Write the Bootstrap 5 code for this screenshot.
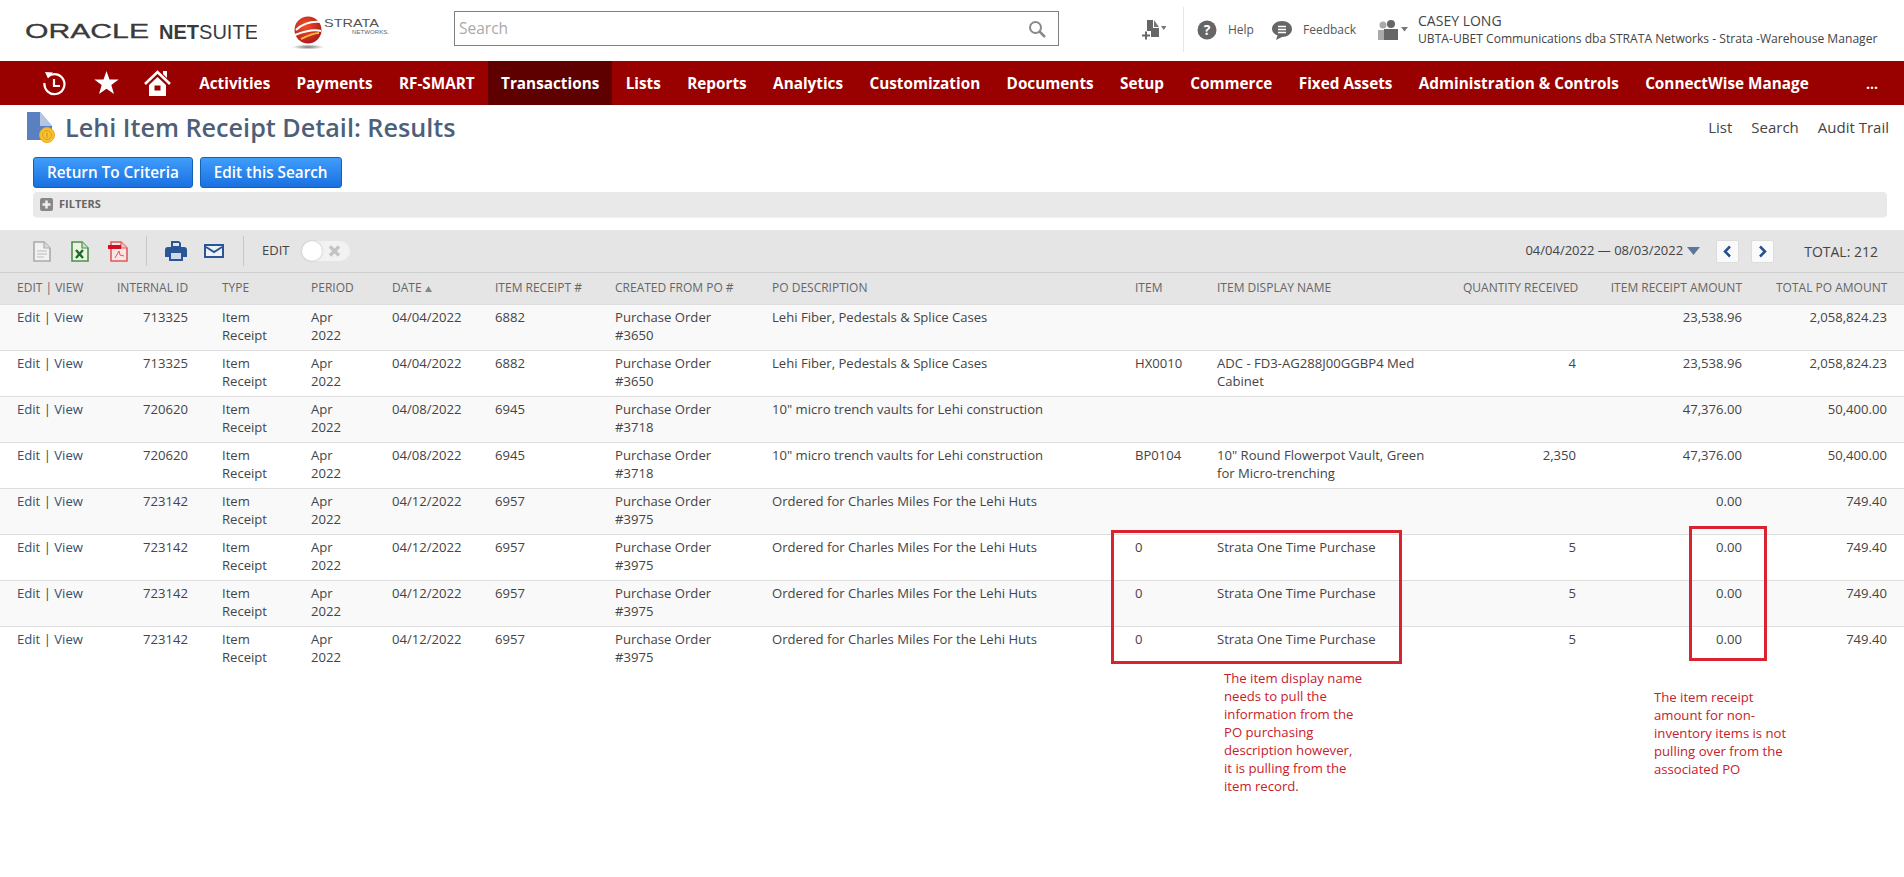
<!DOCTYPE html>
<html lang="en">
<head>
<meta charset="utf-8">
<title>Lehi Item Receipt Detail: Results</title>
<link href="https://cdn.jsdelivr.net/npm/bootstrap@5.3.0/dist/css/bootstrap.min.css" rel="stylesheet">
<style>
html,body{background:#fff;}
body{font-family:"Open Sans","Liberation Sans",sans-serif;font-size:13px;color:#444;position:relative;min-height:877px;overflow:hidden;}
.top-bar{height:61px;}
.top-bar>*,.tools>*{flex-shrink:0;}
.logo-ns{margin-left:25px;width:232px;height:30px;}
.logo-st{margin-left:36px;width:100px;height:44px;}
.search-box{margin:0 0 4px 61px;width:605px;height:35px;border:1px solid #808080;padding:0 12px 0 4px;color:#aaa;font-size:15.5px;}
.tools{margin:0 0 2px 83px;height:45px;}
.tool-div{width:1px;height:45px;background:#e6e6e6;margin:0 13px 0 17px;}
.tool-txt{font-size:12px;color:#555;margin-left:11px;}
.tool-fb{margin-left:18px;}
.tool-txt.fb-txt{margin-right:20px;}
.who{line-height:18px;margin-left:9px;white-space:nowrap;color:#444;}
.who-name{font-size:14px;}
.who-org{font-size:12.1px;}
.main-nav{height:44px;background:#990000;padding-left:25px;color:#fff;}
.ic-a{width:58px;}
.ic-b{width:46px;}
.ic-c{width:57px;}
.nav-it{height:44px;padding:0 13.2px;font-weight:700;font-size:15.3px;color:#fff;white-space:nowrap;}
.nav-on{background:#5e0000;}
.nav-more{margin-left:auto;margin-right:26px;font-weight:700;font-size:14px;}
.title-row{height:52px;padding:0 15px 8px 27px;}
.page-title{font-size:25.2px;font-weight:600;color:#4d5f79;margin:0 0 0 10px;line-height:30px;}
.page-links{font-size:15px;color:#444;gap:19px;}
.act-btns{padding-left:33px;gap:7px;}
.act-btn{height:31px;padding:0 13px;font-size:15.3px;font-weight:600;line-height:29px;color:#fff;border:1px solid #1462b5;border-radius:3px;background:linear-gradient(#3f9dfb,#1a70e0);}
.filter-bar{margin:4px 17px 0 33px;height:26px;background:#e9e9e9;border-radius:4px;border-bottom:1px solid #f2f2f2;padding-left:7px;gap:6px;font-size:11px;font-weight:700;color:#666;}
.tool-row{margin-top:12px;height:43px;background:#e5e5e5;border-bottom:1px solid #d0d0d0;}
.i-doc{margin-left:33px;}
.i-xls{margin-left:20px;}
.i-pdf{margin-left:19px;}
.i-prn{margin-left:18px;}
.i-mail{margin-left:17px;}
.tb-sep{width:1px;height:30px;background:#c8c8c8;}
.sep-a{margin-left:18px;}
.sep-b{margin-left:19px;}
.tb-edit{font-size:13px;color:#444;margin-left:18px;}
.edit-tog{width:48px;height:20px;border-radius:10px;background:#f2f2f2;margin-left:13px;position:relative;}
.edit-knob{position:absolute;left:0;top:0;width:20px;height:20px;border-radius:50%;background:#fff;box-shadow:0 0 2px #aaa;}
.edit-x{position:absolute;left:26px;top:4px;}
.date-rng{font-size:13px;color:#444;white-space:nowrap;}
.pg-btn{width:23px;height:23px;background:#fafafa;border:1px solid #ddd;border-radius:2px;}
.pg-next{margin-left:12px;}
.tot{font-size:14px;color:#444;margin:0 26px 0 30px;white-space:nowrap;}
table.rep{table-layout:fixed;width:1904px;margin:0;border-collapse:collapse;}
.rep th{background:#e5e5e5;height:31px;padding:0 17px;font-size:12px;font-weight:400;color:#666;white-space:nowrap;vertical-align:middle;border:0;border-bottom:1px solid #ddd;}
.rep td{padding:3px 17px 6px;font-size:13.1px;line-height:18px;color:#444;vertical-align:top;border:0;border-bottom:1px solid #ddd;background:#fff;}
.rep tbody tr:nth-child(odd) td{background:#f9f9f9;}
.rep tbody tr:last-child td{border-bottom:0;background:#fff;}
.rep td.dt{white-space:nowrap;}
.rep a{color:#34506f;text-decoration:none;}
.ann-box{position:absolute;border:3px solid #d9232e;}
.ann-a{left:1111px;top:530px;width:291px;height:134px;}
.ann-b{left:1689px;top:526px;width:78px;height:135px;}
.ann-note{position:absolute;font-size:13.15px;line-height:18px;color:#c8202b;white-space:nowrap;}
.note-a{left:1224px;top:669px;}
.note-b{left:1654px;top:688px;}
</style>
</head>
<body>
<header class="top-bar d-flex align-items-center">
  <svg class="logo-ns" viewBox="0 0 232 30" aria-label="Oracle NetSuite">
    <text x="0" y="22" font-family="Liberation Sans" font-size="20" fill="#3a3a3a" stroke="#3a3a3a" stroke-width=".3" textLength="124" lengthAdjust="spacingAndGlyphs">ORACLE</text>
    <text x="134" y="22.500" font-family="Liberation Sans" font-size="20" textLength="99" lengthAdjust="spacingAndGlyphs" fill="#3a3a3a"><tspan font-weight="700">NET</tspan>SUITE</text>
  </svg>
  <svg class="logo-st" viewBox="0 0 100 44">
    <defs>
      <radialGradient id="rg" cx=".4" cy=".35" r=".75"><stop offset="0" stop-color="#f0502a"/><stop offset="1" stop-color="#a81414"/></radialGradient>
      <radialGradient id="sh"><stop offset="0" stop-color="#777"/><stop offset="1" stop-color="#fff"/></radialGradient>
    </defs>
    <ellipse cx="15" cy="38" rx="16" ry="2.500" fill="url(#sh)"/>
    <circle cx="15" cy="21" r="13.500" fill="url(#rg)"/>
    <path d="M3 21C10 14 20 12 29 13M2 26C12 22 20 20 28 22" stroke="#fff" stroke-width="2" fill="none"/>
    <path d="M8 30C14 27 20 24 26 24" stroke="#f6b73c" stroke-width="2" fill="none"/>
    <text x="31" y="18" font-family="Liberation Sans" font-size="11" fill="#555" textLength="55" lengthAdjust="spacingAndGlyphs">STRATA</text>
    <text x="59" y="25" font-family="Liberation Sans" font-size="5" fill="#666" textLength="37" lengthAdjust="spacingAndGlyphs">NETWORKS.</text>
  </svg>
  <div class="search-box d-flex align-items-center justify-content-between">
    <span>Search</span>
    <svg width="18" height="18" viewBox="0 0 18 18"><circle cx="7.500" cy="7.500" r="5.500" fill="none" stroke="#8a8a8a" stroke-width="2"/><path d="M11.500 11.500L17 17" stroke="#8a8a8a" stroke-width="2.500"/></svg>
  </div>
  <div class="tools d-flex align-items-center">
    <svg width="24" height="20" viewBox="0 0 24 20"><path d="M5 0h6v8h6v9H9v-6H5z" fill="#666"/><path d="M12 0l5 7h-5z" fill="#777"/><path d="M0 15.500h8M4 11.500v8" stroke="#666" stroke-width="2"/><path d="M19 6h5.500l-2.750 4z" fill="#777"/></svg>
    <span class="tool-div"></span>
    <svg width="20" height="20" viewBox="0 0 20 20"><circle cx="10" cy="10" r="9.500" fill="#666"/><text x="10" y="15" text-anchor="middle" font-family="Open Sans" font-weight="700" font-size="14" fill="#fff">?</text></svg>
    <span class="tool-txt">Help</span>
    <svg class="tool-fb" width="20" height="20" viewBox="0 0 20 20"><path d="M10 1c5.500 0 10 3.500 10 8s-4.500 8-10 8l-6 3 1.500-4.500C2 14 0 12 0 9c0-4.500 4.500-8 10-8z" fill="#666"/><path d="M6 6.500h8M6 9.500h8M6 12.500h8" stroke="#fff" stroke-width="1.500"/></svg>
    <span class="tool-txt fb-txt">Feedback</span>
    <svg width="33" height="20" viewBox="0 0 33 20"><circle cx="7" cy="5" r="3.500" fill="#aaa"/><path d="M2 10h6v10H2z" fill="#aaa"/><circle cx="15" cy="4" r="4" fill="#666"/><path d="M8 9h14v11H8z" fill="#666"/><path d="M25 7h7l-3.500 4.500z" fill="#777"/></svg>
    <div class="who"><div class="who-name">CASEY LONG</div><div class="who-org">UBTA-UBET Communications dba STRATA Networks - Strata -Warehouse Manager</div></div>
  </div>
</header>

<nav class="main-nav d-flex align-items-center">
  <span class="ic-a d-flex justify-content-center"><svg width="24" height="27" viewBox="0 0 24 27"><path d="M6 6.500A10 10 0 1 1 2.500 13" fill="none" stroke="#fff" stroke-width="2.200"/><path d="M3 2l8 .5-5 6z" fill="#fff"/><path d="M12 9v7h6" fill="none" stroke="#fff" stroke-width="2.200"/></svg></span>
  <span class="ic-b d-flex justify-content-center"><svg width="25" height="24" viewBox="0 0 25 24"><path fill="#fff" d="M12.500 0l3 8.600h9.200l-7.400 5.500 2.700 8.900-7.500-5.300L5 23l2.700-8.900L.3 8.600h9.200z"/></svg></span>
  <span class="ic-c d-flex justify-content-center"><svg width="27" height="26" viewBox="0 0 27 26"><path d="M1 14L13.500 2 26 14" fill="none" stroke="#fff" stroke-width="2.600"/><path d="M19 1h4v7l-4-4z" fill="#fff"/><path fill-rule="evenodd" d="M5 15l8.500-8 8.500 8v11H5zM10.500 15.500v5h6v-5z" fill="#fff"/></svg></span>
  <span class="nav-it d-flex align-items-center">Activities</span>
  <span class="nav-it d-flex align-items-center">Payments</span>
  <span class="nav-it d-flex align-items-center">RF-SMART</span>
  <span class="nav-it nav-on d-flex align-items-center">Transactions</span>
  <span class="nav-it d-flex align-items-center">Lists</span>
  <span class="nav-it d-flex align-items-center">Reports</span>
  <span class="nav-it d-flex align-items-center">Analytics</span>
  <span class="nav-it d-flex align-items-center">Customization</span>
  <span class="nav-it d-flex align-items-center">Documents</span>
  <span class="nav-it d-flex align-items-center">Setup</span>
  <span class="nav-it d-flex align-items-center">Commerce</span>
  <span class="nav-it d-flex align-items-center">Fixed Assets</span>
  <span class="nav-it d-flex align-items-center">Administration &amp; Controls</span>
  <span class="nav-it d-flex align-items-center">ConnectWise Manage</span>
  <span class="nav-more">...</span>
</nav>

<div class="title-row d-flex align-items-center justify-content-between">
  <div class="d-flex align-items-center">
    <svg width="28" height="31" viewBox="0 0 28 31"><path d="M0 0h13l12 14v14H0z" fill="#5b80bf"/><path d="M13 0l12 14H13z" fill="#b6c6e2"/><circle cx="20" cy="23" r="7.500" fill="#f6c22f" stroke="#e9a91d"/><circle cx="20" cy="23" r="4.500" fill="none" stroke="#d9a021"/><path d="M20 20.500v5" stroke="#c88f1a"/></svg>
    <h1 class="page-title">Lehi Item Receipt Detail: Results</h1>
  </div>
  <div class="page-links d-flex"><span>List</span><span>Search</span><span>Audit Trail</span></div>
</div>

<div class="act-btns d-flex">
  <button class="btn act-btn">Return To Criteria</button>
  <button class="btn act-btn">Edit this Search</button>
</div>
<div class="filter-bar d-flex align-items-center">
  <svg width="13" height="13" viewBox="0 0 13 13"><rect width="13" height="13" rx="2" fill="#888"/><path d="M6.500 2.500v8M2.500 6.500h8" stroke="#eee" stroke-width="2.500"/></svg>
  <span>FILTERS</span>
</div>

<div class="tool-row d-flex align-items-center">
  <svg class="i-doc" width="18" height="21" viewBox="0 0 18 21"><path d="M1 1h10l6 6v13H1z" fill="#f2f2f2" stroke="#aaa" stroke-width="1.600"/><path d="M11 1v6h6" fill="#ddd" stroke="#aaa" stroke-width="1.200"/><path d="M4 10h10M4 13h10M4 16h7" stroke="#bbb"/></svg>
  <svg class="i-xls" width="18" height="21" viewBox="0 0 18 21"><path d="M1 1h10l6 6v13H1z" fill="#eaf3e6" stroke="#4d9147" stroke-width="1.600"/><path d="M11 1v6h6" fill="#cfe3c9" stroke="#4d9147" stroke-width="1.200"/><path d="M5 9l7 8M12 9l-7 8" stroke="#1f6d24" stroke-width="2.400"/></svg>
  <svg class="i-pdf" width="20" height="21" viewBox="0 0 20 21"><path d="M3 1h10l6 6v13H3z" fill="#f9e6e6" stroke="#e4575a" stroke-width="1.600"/><path d="M13 1v6h6" fill="#f3c7c7" stroke="#e4575a" stroke-width="1.200"/><path d="M0 4h13v4H0z" fill="#cf1020"/><path d="M7 17l4-7 1 4 4 1" fill="none" stroke="#e4575a"/></svg>
  <span class="tb-sep sep-a"></span>
  <svg class="i-prn" width="22" height="20" viewBox="0 0 22 20"><path d="M6 0h8l2 2v4H6z" fill="#2a5596"/><path d="M8 2h6v3H8z" fill="#e5e5e5"/><path d="M3 6h16a3 3 0 0 1 3 3v7h-4v4H4v-4H0V9a3 3 0 0 1 3-3z" fill="#2a5596"/><path d="M6 12h10v6H6z" fill="#cdd8ea"/></svg>
  <svg class="i-mail" width="20" height="14" viewBox="0 0 20 14"><rect x="1" y="1" width="18" height="12" fill="#eef2f8" stroke="#2a5596" stroke-width="2"/><path d="M2 3l8 5 8-5" fill="none" stroke="#2a5596" stroke-width="2"/></svg>
  <span class="tb-sep sep-b"></span>
  <span class="tb-edit">EDIT</span>
  <span class="edit-tog"><span class="edit-knob"></span><svg class="edit-x" width="13" height="12" viewBox="0 0 13 12"><path d="M2 1.500l9 9M11 1.500l-9 9" stroke="#c4c4c4" stroke-width="3.400"/></svg></span>
  <div class="ms-auto d-flex align-items-center">
    <span class="date-rng">04/04/2022 — 08/03/2022</span>
    <svg class="ms-1 me-3" width="13" height="8" viewBox="0 0 13 8"><path d="M0 0h13L6.500 8z" fill="#5d7699"/></svg>
    <span class="pg-btn d-flex align-items-center justify-content-center"><svg width="9" height="13" viewBox="0 0 9 13"><path d="M7 1.500L2 6.500l5 5" fill="none" stroke="#24508f" stroke-width="2.500"/></svg></span>
    <span class="pg-btn pg-next d-flex align-items-center justify-content-center"><svg width="9" height="13" viewBox="0 0 9 13"><path d="M2 1.500l5 5-5 5" fill="none" stroke="#24508f" stroke-width="2.500"/></svg></span>
    <span class="tot">TOTAL: 212</span>
  </div>
</div>

<table class="table rep">
  <colgroup>
    <col style="width:100px"><col style="width:105px"><col style="width:89px"><col style="width:81px"><col style="width:103px"><col style="width:120px"><col style="width:157px"><col style="width:363px"><col style="width:82px"><col style="width:246px"><col style="width:147px"><col style="width:166px"><col style="width:145px">
  </colgroup>
  <thead>
    <tr><th>EDIT | VIEW</th><th class="text-end">INTERNAL ID</th><th>TYPE</th><th>PERIOD</th><th>DATE <svg width="7" height="6" viewBox="0 0 7 6"><path d="M3.500 0L7 6H0z" fill="#888"/></svg></th><th>ITEM RECEIPT #</th><th>CREATED FROM PO #</th><th>PO DESCRIPTION</th><th>ITEM</th><th>ITEM DISPLAY NAME</th><th class="text-end">QUANTITY RECEIVED</th><th class="text-end">ITEM RECEIPT AMOUNT</th><th class="text-end">TOTAL PO AMOUNT</th></tr>
  </thead>
  <tbody>
    <tr><td class="dt"><a href="#">Edit</a> | <a href="#">View</a></td><td class="text-end">713325</td><td>Item Receipt</td><td>Apr 2022</td><td class="dt">04/04/2022</td><td>6882</td><td>Purchase Order #3650</td><td>Lehi Fiber, Pedestals &amp; Splice Cases</td><td></td><td></td><td class="text-end"></td><td class="text-end">23,538.96</td><td class="text-end">2,058,824.23</td></tr>
    <tr><td class="dt"><a href="#">Edit</a> | <a href="#">View</a></td><td class="text-end">713325</td><td>Item Receipt</td><td>Apr 2022</td><td class="dt">04/04/2022</td><td>6882</td><td>Purchase Order #3650</td><td>Lehi Fiber, Pedestals &amp; Splice Cases</td><td>HX0010</td><td>ADC - FD3-AG288J00GGBP4 Med Cabinet</td><td class="text-end">4</td><td class="text-end">23,538.96</td><td class="text-end">2,058,824.23</td></tr>
    <tr><td class="dt"><a href="#">Edit</a> | <a href="#">View</a></td><td class="text-end">720620</td><td>Item Receipt</td><td>Apr 2022</td><td class="dt">04/08/2022</td><td>6945</td><td>Purchase Order #3718</td><td>10" micro trench vaults for Lehi construction</td><td></td><td></td><td class="text-end"></td><td class="text-end">47,376.00</td><td class="text-end">50,400.00</td></tr>
    <tr><td class="dt"><a href="#">Edit</a> | <a href="#">View</a></td><td class="text-end">720620</td><td>Item Receipt</td><td>Apr 2022</td><td class="dt">04/08/2022</td><td>6945</td><td>Purchase Order #3718</td><td>10" micro trench vaults for Lehi construction</td><td>BP0104</td><td>10" Round Flowerpot Vault, Green for Micro-trenching</td><td class="text-end">2,350</td><td class="text-end">47,376.00</td><td class="text-end">50,400.00</td></tr>
    <tr><td class="dt"><a href="#">Edit</a> | <a href="#">View</a></td><td class="text-end">723142</td><td>Item Receipt</td><td>Apr 2022</td><td class="dt">04/12/2022</td><td>6957</td><td>Purchase Order #3975</td><td>Ordered for Charles Miles For the Lehi Huts</td><td></td><td></td><td class="text-end"></td><td class="text-end">0.00</td><td class="text-end">749.40</td></tr>
    <tr><td class="dt"><a href="#">Edit</a> | <a href="#">View</a></td><td class="text-end">723142</td><td>Item Receipt</td><td>Apr 2022</td><td class="dt">04/12/2022</td><td>6957</td><td>Purchase Order #3975</td><td>Ordered for Charles Miles For the Lehi Huts</td><td>0</td><td>Strata One Time Purchase</td><td class="text-end">5</td><td class="text-end">0.00</td><td class="text-end">749.40</td></tr>
    <tr><td class="dt"><a href="#">Edit</a> | <a href="#">View</a></td><td class="text-end">723142</td><td>Item Receipt</td><td>Apr 2022</td><td class="dt">04/12/2022</td><td>6957</td><td>Purchase Order #3975</td><td>Ordered for Charles Miles For the Lehi Huts</td><td>0</td><td>Strata One Time Purchase</td><td class="text-end">5</td><td class="text-end">0.00</td><td class="text-end">749.40</td></tr>
    <tr><td class="dt"><a href="#">Edit</a> | <a href="#">View</a></td><td class="text-end">723142</td><td>Item Receipt</td><td>Apr 2022</td><td class="dt">04/12/2022</td><td>6957</td><td>Purchase Order #3975</td><td>Ordered for Charles Miles For the Lehi Huts</td><td>0</td><td>Strata One Time Purchase</td><td class="text-end">5</td><td class="text-end">0.00</td><td class="text-end">749.40</td></tr>
  </tbody>
</table>

<div class="ann-box ann-a"></div>
<div class="ann-box ann-b"></div>
<div class="ann-note note-a">The item display name<br>needs to pull the<br>information from the<br>PO purchasing<br>description however,<br>it is pulling from the<br>item record.</div>
<div class="ann-note note-b">The item receipt<br>amount for non-<br>inventory items is not<br>pulling over from the<br>associated PO</div>

<script src="https://cdn.jsdelivr.net/npm/bootstrap@5.3.0/dist/js/bootstrap.bundle.min.js"></script>
</body>
</html>
